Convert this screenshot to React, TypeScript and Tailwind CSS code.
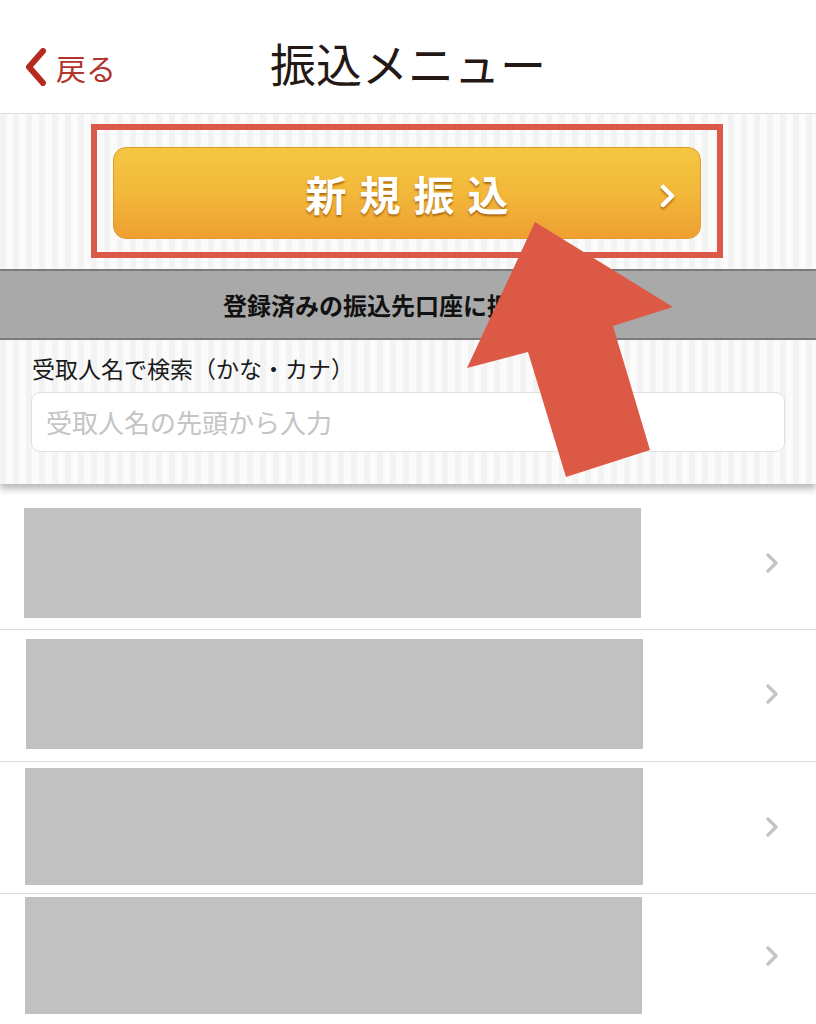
import { ChevronRight } from "lucide-react"

const rows = [
  { pt: "pt-[24px]", pb: "pb-[11px]", h: "h-[110px]", ml: "ml-[24px]", w: "w-[617px]" },
  { pt: "pt-[9px]", pb: "pb-[12px]", h: "h-[110px]", ml: "ml-[26px]", w: "w-[617px]" },
  { pt: "pt-[6px]", pb: "pb-[8px]", h: "h-[117px]", ml: "ml-[25px]", w: "w-[618px]" },
  { pt: "pt-[3px]", pb: "pb-[11px]", h: "h-[117px]", ml: "ml-[25px]", w: "w-[617px]" },
]

const stripes =
  "bg-[repeating-linear-gradient(90deg,#f3f3f3_0px,#f3f3f3_6px,#fbfbfb_6px,#fbfbfb_13px)]"

const App = () => {
  return (
    <div className="relative w-[816px] h-[1024px] overflow-hidden bg-white font-[family-name:'Noto_Sans_CJK_JP',sans-serif]">
      {/* header */}
      <div className="relative flex items-center justify-center h-[114px] border-b border-[#e2e2e2] bg-white">
        <div className="absolute left-[24px] top-[48px] flex items-center gap-[8px]">
          <svg width="24" height="38" viewBox="0 0 24 38" className="shrink-0">
            <polyline
              points="19,3 5,19 19,35"
              fill="none"
              stroke="#b5291f"
              strokeWidth="6"
              strokeLinecap="round"
              strokeLinejoin="round"
            />
          </svg>
          <span className="text-[30px] leading-none text-[#b2342b]">戻る</span>
        </div>
        <h1 className="text-[46px] leading-none text-[#231815] mt-[10px]">振込メニュー</h1>
      </div>

      {/* striped search area */}
      <div className={`relative z-10 pt-[10px] pb-[32px] ${stripes} shadow-[0_5px_7px_rgba(0,0,0,0.28)]`}>
        <div className="ml-[91px] w-[632px] border-[6px] border-[#da5948] px-[16px] pt-[17px] pb-[13px]">
          <button className="relative flex items-center justify-center w-full h-[92px] rounded-[13px] border border-[#e29a2e] bg-[linear-gradient(180deg,#f4c640_0%,#f2b83a_50%,#ee9f31_100%)]">
            <span className="text-[41px] font-bold tracking-[13px] pl-[13px] text-white leading-none [text-shadow:0_2px_2px_rgba(150,80,0,0.75)]">
              新規振込
            </span>
            <svg
              width="20"
              height="24"
              viewBox="0 0 20 24"
              className="absolute right-[22px] top-[36px] drop-shadow-[0_2px_1px_rgba(150,80,0,0.7)]"
            >
              <polyline
                points="5,3 14,12 5,21"
                fill="none"
                stroke="#ffffff"
                strokeWidth="4.5"
                strokeLinecap="round"
                strokeLinejoin="round"
              />
            </svg>
          </button>
        </div>

        <div className="mt-[11px] flex items-center justify-center h-[71px] bg-[#a9a9a9] border-y-2 border-[#7b7b7b] pr-[58px]">
          <span className="text-[24px] font-bold text-[#111] leading-none">登録済みの振込先口座に振込</span>
        </div>

        <div className="px-[31px] pt-[17px]">
          <div className="text-[23px] leading-none text-[#1a1a1a] pl-[1px]">受取人名で検索（かな・カナ）</div>
          <div className="mt-[12px] flex items-center h-[60px] w-[754px] rounded-[9px] border border-[#e0e0e0] bg-white px-[14px]">
            <span className="text-[26px] leading-none text-[#c4c4c4]">受取人名の先頭から入力</span>
          </div>
        </div>
      </div>

      {/* list */}
      <div className="flex flex-col">
        {rows.map((r, i) => (
          <div
            key={i}
            className={`flex items-center justify-between ${r.pt} ${r.pb} ${i < rows.length - 1 ? "border-b border-[#dcdcdc]" : ""}`}
          >
            <div className={`${r.ml} ${r.w} ${r.h} bg-[#c1c1c1]`} />
            <ChevronRight className="mr-[28px] text-[#c4c4c8]" size={32} strokeWidth={2.5} />
          </div>
        ))}
      </div>

      {/* annotation arrow */}
      <svg
        className="absolute inset-0 z-20 pointer-events-none"
        width="816"
        height="1024"
        viewBox="0 0 816 1024"
      >
        <polygon
          points="535,222 673,307 613,326 650,450 566,477 528,352 467,368"
          fill="#dc5a45"
        />
      </svg>
    </div>
  )
}

export default App
